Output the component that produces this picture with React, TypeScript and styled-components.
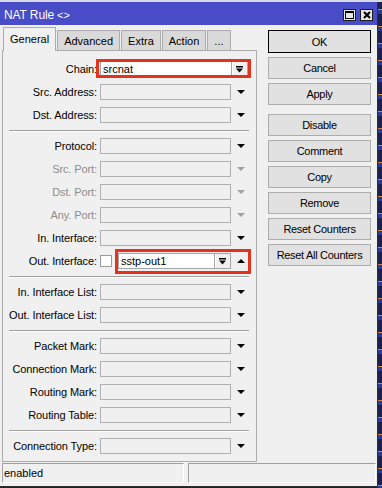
import React from 'react'
import styled, { createGlobalStyle } from 'styled-components'

const GlobalStyle = createGlobalStyle`
  html, body {
    margin: 0;
    padding: 0;
  }
  body {
    background: #1d2347;
    font-family: 'Liberation Sans', Arial, sans-serif;
    font-size: 11px;
    color: #000;
  }
`

const Screen = styled.div`
  width: 382px;
  height: 488px;
  display: flex;
  flex-direction: column;
  overflow: hidden;
`

const TopStrip = styled.div`
  flex: none;
  height: 2px;
  background: #d7d8ec;
`

const Desk = styled.div`
  flex: 1;
  display: flex;
`

const RightStrip = styled.div`
  flex: 1;
  background: repeating-linear-gradient(
    180deg,
    #1b214a 0 7px,
    #c98a3c 7px 8px,
    #2b3b92 8px 12px,
    #1b214a 12px 17px
  );
`

const Window = styled.div`
  width: 378px;
  height: 485px;
  box-sizing: border-box;
  display: flex;
  flex-direction: column;
  background: #f0f0f0;
  border-right: 1px solid #2e2e2e;
  border-bottom: 1px solid #2e2e2e;
`

const TitleBar = styled.div`
  flex: none;
  height: 23px;
  box-sizing: border-box;
  padding: 3px 4px 0 4px;
  display: flex;
  align-items: center;
  background: #484cc6;
  color: #fff;
  font-size: 12px;
`

const TitleText = styled.span`
  letter-spacing: -0.1px;
`

const TitleIcon = styled.span`
  margin-left: 3px;
  font-size: 11px;
`

const TitleButtons = styled.div`
  margin-left: auto;
  align-self: flex-end;
  margin-bottom: 4px;
  display: flex;
  gap: 4px;
`

const TitleButton = styled.div`
  width: 13px;
  height: 12px;
  box-sizing: border-box;
  border: 1px solid #1c1c1c;
  background: #e6e6e6;
  display: flex;
  align-items: center;
  justify-content: center;
`

const Body = styled.div`
  flex: none;
  display: flex;
  padding: 2px 0 0 2px;
`

const LeftCol = styled.div`
  width: 255px;
  display: flex;
  flex-direction: column;
`

const TabBar = styled.div`
  position: relative;
  z-index: 1;
  height: 24px;
  padding-left: 1px;
  display: flex;
  align-items: flex-end;
`

const Tab = styled.div<{ $active?: boolean }>`
  height: ${(p) => (p.$active ? 24 : 21)}px;
  box-sizing: border-box;
  padding: 0 6px;
  margin-right: 1px;
  display: flex;
  align-items: center;
  border: 1px solid #acacac;
  border-bottom: ${(p) => (p.$active ? 'none' : '1px solid #acacac')};
  background: ${(p) => (p.$active ? '#f0f0f0' : '#d9d9d9')};
  padding-bottom: ${(p) => (p.$active ? 1 : 0)}px;
`

const Panel = styled.div`
  margin-top: -1px;
  border: 1px solid #acacac;
  padding-top: 10px;
  display: flex;
  flex-direction: column;
`

const Row = styled.div`
  height: 23px;
  display: flex;
  align-items: flex-start;
`

const Label = styled.div<{ $muted?: boolean }>`
  width: 94px;
  flex: none;
  text-align: right;
  line-height: 16px;
  white-space: nowrap;
  letter-spacing: -0.1px;
  color: ${(p) => (p.$muted ? '#8d8d8d' : '#000')};
`

const Field = styled.div`
  margin-left: 3px;
  width: 131px;
  height: 16px;
  box-sizing: border-box;
  border: 1px solid #b0b0b0;
  background: #f0f0f0;
`

const ArrowCell = styled.div<{ $w?: number }>`
  width: ${(p) => p.$w ?? 20}px;
  height: 16px;
  box-sizing: border-box;
  padding-left: 6px;
  display: flex;
  align-items: center;
`

const Marked = styled.div<{ $inset: string; $ml: number }>`
  position: relative;
  display: flex;
  margin-left: ${(p) => p.$ml}px;

  &::after {
    content: '';
    position: absolute;
    inset: ${(p) => p.$inset};
    border: 3px solid #e2341d;
    pointer-events: none;
  }
`

const Combo = styled.div<{ $w: number }>`
  width: ${(p) => p.$w}px;
  height: 16px;
  box-sizing: border-box;
  display: flex;
  border: 1px solid #a5a5a5;
  background: #fff;
`

const ComboText = styled.div`
  flex: 1;
  padding-left: 2px;
  line-height: 14px;
`

const ComboButton = styled.div`
  width: 16px;
  box-sizing: border-box;
  border-left: 1px solid #a5a5a5;
  box-shadow: inset 1px 0 0 #fff;
  background: #f0f0f0;
  display: flex;
  align-items: center;
  justify-content: center;
`

const Check = styled.div`
  margin: 2px 0 0 3px;
  width: 12px;
  height: 12px;
  box-sizing: border-box;
  border: 1px solid #9a9a9a;
  background: #fff;
`

const Separator = styled.div`
  height: 8px;
  margin: 0 7px 0 6px;
  box-sizing: border-box;
  border-top: 1px solid #a0a0a0;
  box-shadow: inset 0 1px 0 #fff;
`

const RightCol = styled.div`
  width: 103px;
  margin-left: 11px;
  padding-top: 3px;
  display: flex;
  flex-direction: column;
  gap: 4px;
`

const Button = styled.div<{ $default?: boolean; $spaced?: boolean }>`
  height: ${(p) => (p.$default ? 23 : 22)}px;
  box-sizing: border-box;
  margin-top: ${(p) => (p.$spaced ? 5 : 0)}px;
  display: flex;
  align-items: center;
  justify-content: center;
  letter-spacing: -0.3px;
  background: #e1e1e1;
  border: 1px solid ${(p) => (p.$default ? '#000' : '#adadad')};
`

const StatusBar = styled.div`
  flex: none;
  margin-top: 1px;
  padding: 0 1px 0 2px;
  display: flex;
  gap: 4px;
`

const StatusCell = styled.div<{ $w?: number }>`
  height: 20px;
  box-sizing: border-box;
  ${(p) => (p.$w ? `width: ${p.$w}px;` : 'flex: 1;')}
  padding-left: 1px;
  line-height: 18px;
  border: 1px solid;
  border-color: #a0a0a0 #fff #fff #a0a0a0;
`

const DownArrow = ({ muted }: { muted?: boolean }) => (
  <svg width="8" height="4" viewBox="0 0 8 4">
    <polygon points="0,0 8,0 4,4" fill={muted ? '#a0a0a0' : '#000'} />
  </svg>
)

const UpArrow = () => (
  <svg width="8" height="4" viewBox="0 0 8 4">
    <polygon points="0,4 8,4 4,0" fill="#000" />
  </svg>
)

const DropGlyph = () => (
  <svg width="7" height="7" viewBox="0 0 7 7">
    <rect x="0" y="0" width="7" height="1.5" fill="#000" />
    <polygon points="0,2.5 7,2.5 3.5,6.5" fill="#000" />
  </svg>
)

type FieldRow = { label: string; muted?: boolean }

const PlainRow = ({ label, muted }: FieldRow) => (
  <Row>
    <Label $muted={muted}>{label}:</Label>
    <Field />
    <ArrowCell>
      <DownArrow muted={muted} />
    </ArrowCell>
  </Row>
)

const groups: FieldRow[][] = [
  [{ label: 'Src. Address' }, { label: 'Dst. Address' }],
  [
    { label: 'Protocol' },
    { label: 'Src. Port', muted: true },
    { label: 'Dst. Port', muted: true },
    { label: 'Any. Port', muted: true },
    { label: 'In. Interface' },
  ],
  [{ label: 'In. Interface List' }, { label: 'Out. Interface List' }],
  [
    { label: 'Packet Mark' },
    { label: 'Connection Mark' },
    { label: 'Routing Mark' },
    { label: 'Routing Table' },
  ],
  [{ label: 'Connection Type' }],
]

const tabs = ['General', 'Advanced', 'Extra', 'Action', '...']

const buttons = [
  'OK',
  'Cancel',
  'Apply',
  'Disable',
  'Comment',
  'Copy',
  'Remove',
  'Reset Counters',
  'Reset All Counters',
]

const App: React.FC = () => {
  return (
    <>
      <GlobalStyle />
      <Screen>
        <TopStrip />
        <Desk>
          <Window>
            <TitleBar>
              <TitleText>NAT Rule</TitleText>
              <TitleIcon>&lt;&gt;</TitleIcon>
              <TitleButtons>
                <TitleButton>
                  <svg width="9" height="8" viewBox="0 0 9 8">
                    <rect x="0.5" y="0.5" width="8" height="7" fill="none" stroke="#000" />
                    <rect x="0" y="0" width="9" height="2" fill="#000" />
                  </svg>
                </TitleButton>
                <TitleButton>
                  <svg width="8" height="8" viewBox="0 0 8 8">
                    <path d="M1 1 L7 7 M7 1 L1 7" stroke="#000" strokeWidth="2" />
                  </svg>
                </TitleButton>
              </TitleButtons>
            </TitleBar>

            <Body>
              <LeftCol>
                <TabBar>
                  {tabs.map((t, i) => (
                    <Tab key={t} $active={i === 0}>
                      {t}
                    </Tab>
                  ))}
                </TabBar>
                <Panel>
                  <Row>
                    <Label>Chain:</Label>
                    <Marked $ml={3} $inset="-2px -3px -1px -4px">
                      <Combo $w={148}>
                        <ComboText>srcnat</ComboText>
                        <ComboButton>
                          <DropGlyph />
                        </ComboButton>
                      </Combo>
                    </Marked>
                  </Row>
                  {groups[0].map((r) => (
                    <PlainRow key={r.label} {...r} />
                  ))}
                  <Separator />
                  {groups[1].map((r) => (
                    <PlainRow key={r.label} {...r} />
                  ))}
                  <Row>
                    <Label>Out. Interface:</Label>
                    <Check />
                    <Marked $ml={6} $inset="-4px -3px -5px -3px">
                      <Combo $w={113}>
                        <ComboText>sstp-out1</ComboText>
                        <ComboButton>
                          <DropGlyph />
                        </ComboButton>
                      </Combo>
                      <ArrowCell $w={17}>
                        <UpArrow />
                      </ArrowCell>
                    </Marked>
                  </Row>
                  <Separator />
                  {groups[2].map((r) => (
                    <PlainRow key={r.label} {...r} />
                  ))}
                  <Separator />
                  {groups[3].map((r) => (
                    <PlainRow key={r.label} {...r} />
                  ))}
                  <Separator />
                  {groups[4].map((r) => (
                    <PlainRow key={r.label} {...r} />
                  ))}
                </Panel>
              </LeftCol>

              <RightCol>
                {buttons.map((b, i) => (
                  <Button key={b} $default={i === 0} $spaced={b === 'Disable'}>
                    {b}
                  </Button>
                ))}
              </RightCol>
            </Body>

            <StatusBar>
              <StatusCell $w={182}>enabled</StatusCell>
              <StatusCell />
            </StatusBar>
          </Window>
          <RightStrip />
        </Desk>
      </Screen>
    </>
  )
}

export default App
